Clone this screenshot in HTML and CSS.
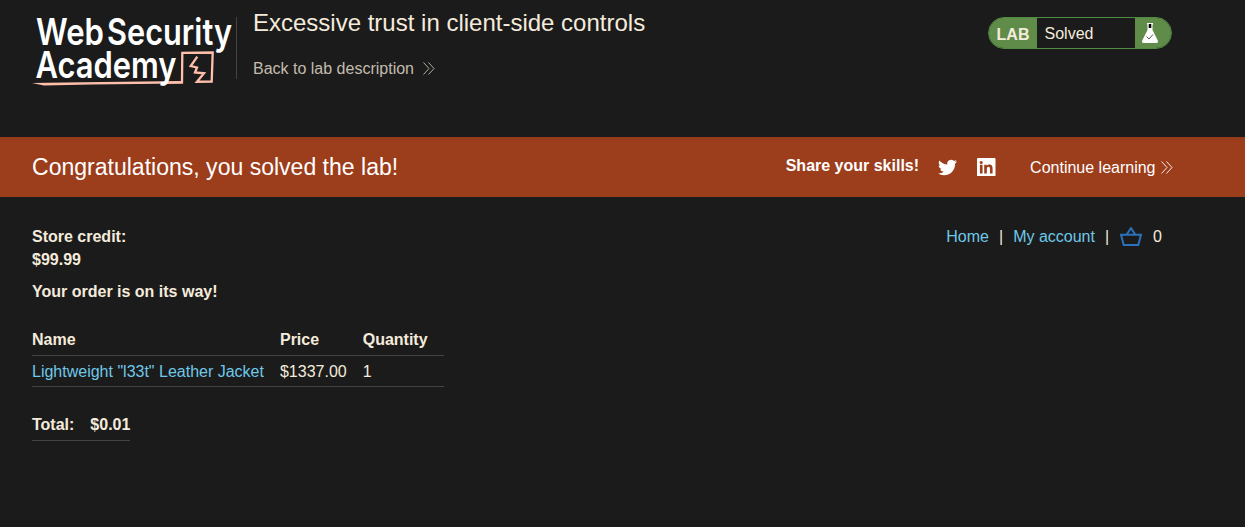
FILE: index.html
```html
<!DOCTYPE html>
<html lang="en">
<head>
  <meta charset="UTF-8">
  <meta name="viewport" content="width=device-width, initial-scale=1.0">
  <title>Excessive trust in client-side controls</title>
  <link rel="stylesheet" href="styles.css">
</head>
<body>

<header class="lab-header">
  <svg class="logo" width="204" height="76" viewBox="0 0 204 76" role="img" aria-label="Web Security Academy">
    <path class="logo-line" d="M0 73L50 72.200L151 71V73.500L60 74.500L12 75.500Z"/>
    <path class="logo-frame" d="M130 72.800L150 72.300L150.300 42.800L180.700 42.500L179.700 71.500L165 71.700L172 63.300L163 62.500L165 57.500L158.700 56L165.300 46.700"/>
    <text class="logo-text" x="4" y="35" textLength="68" lengthAdjust="spacingAndGlyphs">Web</text>
    <text class="logo-text" x="75" y="35" textLength="125" lengthAdjust="spacingAndGlyphs">Security</text>
    <text class="logo-text" x="3.500" y="67.500" textLength="141" lengthAdjust="spacingAndGlyphs">Academy</text>
  </svg>
  <div class="title-container">
    <h2>Excessive trust in client-side controls</h2>
    <a class="link-back" href="#">
      Back to lab description
      <svg class="arrows" width="12" height="13" viewBox="0 0 12 13"><path d="M.5 .5L6 6.500L.5 12.500M5.500 .5L11 6.500L5.500 12.500"/></svg>
    </a>
  </div>
  <div class="lab-status">
    <span class="status-label">LAB</span>
    <p>Solved</p>
    <span class="status-icon">
      <svg width="16" height="20" viewBox="0 0 16 20">
        <path fill="#fff" d="M5 0H11V1.500H10.500V7L15.800 17.500Q16.300 20 14.500 20H1.500Q-.3 20 .2 17.500L5.500 7V1.500H5Z"/>
        <path fill="#000" d="M6.700 1H9.300V5H6.700Z"/>
        <path fill="none" stroke="#555" d="M4.500 13.500L7 16L11 11.500"/>
      </svg>
    </span>
  </div>
</header>

<section class="notification">
  <h4>Congratulations, you solved the lab!</h4>
  <div class="share">
    <span class="share-text">Share your skills!</span>
    <a class="twitter" href="#">
      <svg width="19" height="19" viewBox="0 0 24 24"><path d="M23.953 4.570a10 10 0 01-2.825.775 4.958 4.958 0 002.163-2.723c-.951.555-2.005.959-3.127 1.184a4.920 4.920 0 00-8.384 4.482C7.690 8.095 4.067 6.130 1.640 3.162a4.822 4.822 0 00-.666 2.475c0 1.710.87 3.213 2.188 4.096a4.904 4.904 0 01-2.228-.616v.06a4.923 4.923 0 003.946 4.827 4.996 4.996 0 01-2.212.085 4.936 4.936 0 004.604 3.417 9.867 9.867 0 01-6.102 2.105c-.39 0-.779-.023-1.170-.067a13.995 13.995 0 007.557 2.209c9.053 0 13.998-7.496 13.998-13.985 0-.21 0-.42-.015-.63A9.935 9.935 0 0024 4.590z"/></svg>
    </a>
    <a class="linkedin" href="#">
      <svg width="18.500" height="18.500" viewBox="0 0 19 19"><path fill-rule="evenodd" d="M1 0H18Q19 0 19 1V18Q19 19 18 19H1Q0 19 0 18V1Q0 0 1 0ZM3 7H5.700V16H3ZM4.300 3A1.600 1.600 0 1 0 4.300 6.200A1.600 1.600 0 0 0 4.300 3ZM7.400 7H10V8.300C10.700 7.200 11.600 6.800 12.800 6.800C15.400 6.800 16 8.500 16 11V16H13.300V11.500C13.300 10.200 13.100 9.100 11.800 9.100C10.500 9.100 10.100 10.100 10.100 11.500V16H7.400Z"/></svg>
    </a>
    <a class="continue" href="#">
      Continue learning
      <svg class="arrows" width="12" height="13" viewBox="0 0 12 13"><path d="M.5 .5L6 6.500L.5 12.500M5.500 .5L11 6.500L5.500 12.500"/></svg>
    </a>
  </div>
</section>

<main class="container">
  <div class="order">
    <p><strong>Store credit:<br>$99.99</strong></p>
    <p><strong>Your order is on its way!</strong></p>
    <table class="items">
      <tr>
        <th>Name</th>
        <th>Price</th>
        <th>Quantity</th>
      </tr>
      <tr>
        <td><a href="#">Lightweight "l33t" Leather Jacket</a></td>
        <td>$1337.00</td>
        <td>1</td>
      </tr>
    </table>
    <table class="total">
      <tr>
        <th>Total:</th>
        <th>$0.01</th>
      </tr>
    </table>
  </div>
  <nav class="top-links">
    <a href="#">Home</a>
    <span>|</span>
    <a href="#">My account</a>
    <span>|</span>
    <a class="cart" href="#">
      <svg width="22" height="20" viewBox="0 0 22 20"><path d="M1 7.700H21L18.300 18H3.700ZM6.500 7.700L11 1.200L15.500 7.700"/></svg>
    </a>
    <span>0</span>
  </nav>
</main>

</body>
</html>
```
FILE: styles.css
```css
body {
  margin: 0;
  font-family: "Liberation Sans", Arial, sans-serif;
  font-size: 16px;
  line-height: 23px;
  color: #f5ebdc;
  background: #1b1b1b;
}

h2, h4, p {
  margin: 0;
  font-weight: normal;
}

a {
  color: #6fc8e8;
  text-decoration: none;
}

.lab-header {
  display: flex;
  align-items: flex-start;
  box-sizing: border-box;
  height: 137px;
  padding: 0 73px 0 32px;
}

.logo {
  margin-top: 10px;
  overflow: visible;
}

.logo-text {
  font-family: Inter, sans-serif;
  font-size: 37px;
  font-weight: 600;
  fill: #fff;
}

.logo-line {
  fill: #ffbfab;
}

.logo-frame {
  fill: none;
  stroke: #ffbfab;
  stroke-width: 2.3;
}

.title-container {
  height: 62px;
  margin-top: 17px;
  padding-left: 16px;
  border-left: 1px solid #444;
}

.title-container h2 {
  margin-top: -8px;
  font-size: 24px;
  line-height: 28px;
}

.link-back {
  display: flex;
  align-items: center;
  gap: 9px;
  margin-top: 20px;
  color: #c4bcae;
}

.arrows {
  fill: none;
  stroke: currentColor;
  stroke-width: 0.9;
}

.lab-status {
  display: flex;
  box-sizing: border-box;
  width: 184px;
  height: 32px;
  margin: 17px 0 0 auto;
  border: 1px solid #4f8a41;
  border-radius: 16px;
  overflow: hidden;
  line-height: 32px;
}

.status-label {
  width: 48px;
  line-height: 33px;
  font-weight: bold;
  text-align: center;
  background: #608c4a;
}

.lab-status p {
  flex: 1;
  padding-left: 7.5px;
}

.status-icon {
  width: 36px;
  background: #608c4a;
}

.status-icon svg {
  display: block;
  margin: 5px 0 0 7px;
}

.notification {
  display: flex;
  align-items: center;
  justify-content: space-between;
  height: 60px;
  padding: 0 72.5px 0 32px;
  color: #fff;
  background: linear-gradient(#933b1b, #9c3d1c 4px);
}

.notification h4 {
  font-size: 23.04px;
}

.notification a {
  color: #fff;
}

.notification svg {
  display: block;
}

.share {
  display: flex;
  align-items: center;
}

.share-text {
  margin-bottom: 3px;
  font-weight: bold;
}

.twitter {
  margin-left: 19px;
  fill: #fff;
}

.linkedin {
  margin-left: 20px;
  fill: #fff;
}

.continue {
  display: flex;
  align-items: center;
  gap: 5px;
  margin-left: 34.5px;
}

.container {
  display: flex;
  justify-content: space-between;
  align-items: flex-start;
  padding: 28px 83px 0 32px;
}

.order p {
  margin-bottom: 9px;
}

table {
  border-collapse: collapse;
}

th, td {
  padding: 4px 16px 3px 0;
  text-align: left;
  border-bottom: 1px solid #444;
}

th {
  padding-bottom: 4px;
}

.items {
  margin-top: 21px;
}

.total {
  margin-top: 22px;
}

.total th:last-child {
  padding-right: 0;
}

.top-links {
  display: flex;
  align-items: center;
  gap: 10px;
}

.cart {
  margin: 0 1px;
}

.cart svg {
  display: block;
  fill: none;
  stroke: #2b72bd;
  stroke-width: 2;
}
```
